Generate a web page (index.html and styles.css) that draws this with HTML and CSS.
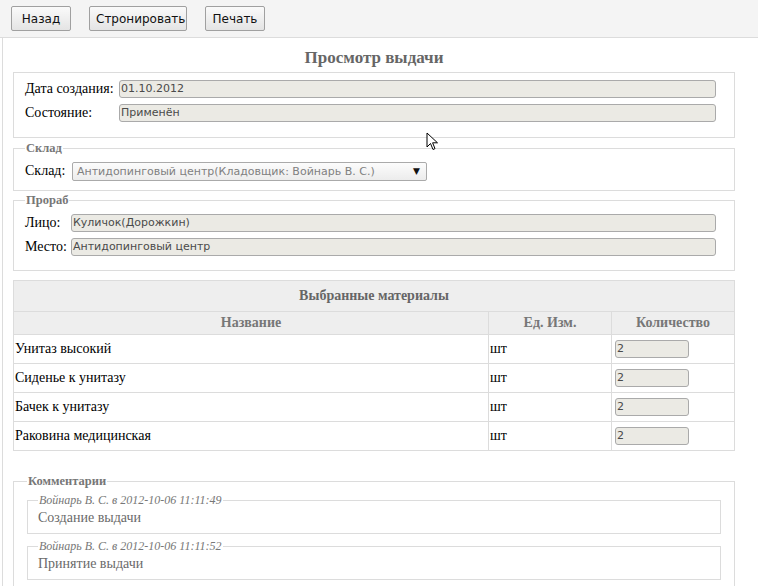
FILE: index.html
```html
<!DOCTYPE html>
<html>
<head>
<meta charset="utf-8">
<link rel="stylesheet" href="styles.css">
</head>
<body>
<div class="toolbar">
  <button class="btn">Назад</button>
  <button class="btn">Стронировать</button>
  <button class="btn">Печать</button>
</div>
<div class="page">
  <h1 class="title">Просмотр выдачи</h1>

  <fieldset class="box box-main">
    <div class="row"><span class="lbl lbl-wide">Дата создания:</span><span class="inp">01.10.2012</span></div>
    <div class="row"><span class="lbl lbl-wide">Состояние:</span><span class="inp">Применён</span></div>
  </fieldset>

  <fieldset class="box box-sklad">
    <legend class="leg">Склад</legend>
    <div class="row"><span class="lbl lbl-sklad">Склад:</span><span class="sel"><span class="sel-text">Антидопинговый центр(Кладовщик: Войнарь В. С.)</span><span class="arrow">▼</span></span></div>
  </fieldset>

  <fieldset class="box box-prorab">
    <legend class="leg">Прораб</legend>
    <div class="row"><span class="lbl lbl-short">Лицо:</span><span class="inp">Куличок(Дорожкин)</span></div>
    <div class="row"><span class="lbl lbl-short">Место:</span><span class="inp">Антидопинговый центр</span></div>
  </fieldset>

  <table class="mat">
    <thead>
      <tr><th colspan="3" class="cap">Выбранные материалы</th></tr>
      <tr><th class="c1">Название</th><th class="c2">Ед. Изм.</th><th class="c3">Количество</th></tr>
    </thead>
    <tbody>
      <tr><td>Унитаз высокий</td><td>шт</td><td><span class="qty">2</span></td></tr>
      <tr><td>Сиденье к унитазу</td><td>шт</td><td><span class="qty">2</span></td></tr>
      <tr><td>Бачек к унитазу</td><td>шт</td><td><span class="qty">2</span></td></tr>
      <tr><td>Раковина медицинская</td><td>шт</td><td><span class="qty">2</span></td></tr>
    </tbody>
  </table>

  <fieldset class="box box-comments">
    <legend class="leg">Комментарии</legend>
    <fieldset class="comment">
      <legend class="cleg">Войнарь В. С. в 2012-10-06 11:11:49</legend>
      <div class="ctext">Создание выдачи</div>
    </fieldset>
    <fieldset class="comment">
      <legend class="cleg">Войнарь В. С. в 2012-10-06 11:11:52</legend>
      <div class="ctext">Принятие выдачи</div>
    </fieldset>
  </fieldset>
</div>
<svg class="cursor" width="13" height="20" viewBox="0 0 13 20">
  <path d="M1 1 L1 15 L4.5 11.5 L7 17.5 L9 16.6 L6.6 10.8 L11.5 10.8 Z" fill="#fff" stroke="#000" stroke-width="1" stroke-linejoin="miter"/>
</svg>
</body>
</html>
```
FILE: styles.css
```css
html, body {
  margin: 0;
  padding: 0;
  background: #fff;
  height: 100%;
  overflow: hidden;
}
body {
  font-family: "Liberation Serif", serif;
  font-size: 14px;
  color: #000;
  position: relative;
}
.toolbar {
  height: 38px;
  box-sizing: border-box;
  background: #f4f4f4;
  border-bottom: 1px solid #dcdcdc;
  display: flex;
  align-items: flex-start;
  gap: 18px;
  padding: 6px 0 0 11px;
}
.btn {
  height: 25px;
  margin: 0;
  padding: 0 6px;
  border: 1px solid #a0a0a0;
  border-radius: 2px;
  background: linear-gradient(#fafafa, #e4e4e4);
  font-family: "DejaVu Sans", sans-serif;
  font-size: 12px;
  color: #111;
}
.btn:nth-child(1) { width: 60px; }
.btn:nth-child(2) { width: 98px; }
.btn:nth-child(3) { width: 60px; }

.page {
  margin-left: 2px;
  border-left: 1px solid #dcdcdc;
  padding: 0 0 0 10px;
  min-height: 600px;
}
.title {
  margin: 0;
  width: 722px;
  padding-top: 10px;
  height: 34px;
  box-sizing: border-box;
  text-align: center;
  font-size: 17px;
  line-height: 20px;
  font-weight: bold;
  color: #666;
}
.box {
  width: 722px;
  box-sizing: border-box;
  margin: 0;
  border: 1px solid #dcdcdc;
  padding: 7px 18px 13px 11px;
  min-inline-size: 0;
}
.box-main { padding-top: 7px; padding-bottom: 15px; }
.box-sklad { margin-top: 4px; padding-top: 8px; padding-bottom: 10px; }
.box-prorab { margin-top: 3px; padding-top: 8px; padding-bottom: 14px; }
.leg {
  font-size: 12.5px;
  line-height: 12px;
  font-weight: bold;
  color: #777;
  padding: 0 1px;
  margin-left: 0;
}
.row {
  display: flex;
  align-items: center;
  height: 18px;
}
.row + .row { margin-top: 6px; }
.lbl {
  font-size: 14px;
  white-space: nowrap;
}
.lbl-wide { width: 94px; }
.lbl-sklad { width: 47px; }
.lbl-short { width: 46px; }
.inp {
  flex: 1;
  height: 18px;
  box-sizing: border-box;
  background: #ebeae4;
  border: 1px solid #aaa;
  border-radius: 3px;
  font-family: "DejaVu Sans", sans-serif;
  font-size: 11px;
  line-height: 16px;
  padding-left: 1px;
  color: #4a4a4a;
}
.sel {
  width: 355px;
  height: 19px;
  box-sizing: border-box;
  border: 1px solid #aaa;
  border-radius: 2px;
  background: linear-gradient(#fcfcfc, #ececec);
  display: flex;
  align-items: center;
  justify-content: space-between;
  padding: 0 6px 0 4px;
  font-family: "DejaVu Sans", sans-serif;
  font-size: 11px;
  color: #808080;
}
.arrow {
  font-size: 9px;
  color: #111;
}

.mat {
  margin-top: 9px;
  width: 722px;
  border-collapse: collapse;
  border: 1px solid #dcdcdc;
}
.mat th {
  background: #eee;
  color: #777;
  font-weight: bold;
  font-size: 14px;
  border: 1px solid #dcdcdc;
  padding: 0;
}
.mat th.cap { height: 30px; color: #666; }
.mat thead tr:nth-child(2) th { height: 22px; }
.c1 { width: 474px; }
.c2 { width: 122px; }
.mat td {
  height: 28px;
  border: 1px solid #dcdcdc;
  padding: 0 0 0 1px;
  font-size: 14px;
  vertical-align: middle;
}
.qty {
  display: inline-block;
  margin-left: 2px;
  width: 74px;
  height: 18px;
  box-sizing: border-box;
  background: #ebeae4;
  border: 1px solid #aaa;
  border-radius: 3px;
  font-family: "DejaVu Sans", sans-serif;
  font-size: 11px;
  line-height: 16px;
  padding-left: 1px;
  color: #4a4a4a;
  vertical-align: middle;
}

.box-comments {
  margin-top: 24px;
  padding: 7px 13px 20px 13px;
}
.comment {
  margin: 0;
  border: 1px solid #dcdcdc;
  padding: 2px 10px 5px 10px;
  min-inline-size: 0;
}
.comment + .comment { margin-top: 6px; }
.cleg {
  font-style: italic;
  font-size: 12px;
  line-height: 12px;
  color: #777;
  padding: 0 1px;
  margin-left: 0;
}
.ctext {
  font-size: 14px;
  line-height: 20px;
  color: #6a6a6a;
}
.cursor {
  position: absolute;
  left: 426px;
  top: 132px;
}
```
